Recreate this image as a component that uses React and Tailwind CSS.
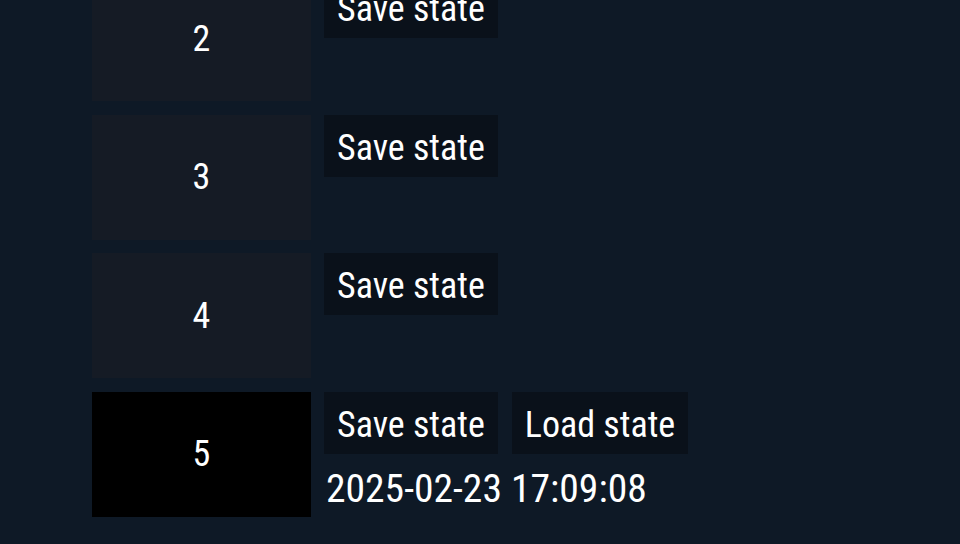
import React from "react";

const slots = [
  { n: 2, date: null, active: false },
  { n: 3, date: null, active: false },
  { n: 4, date: null, active: false },
  { n: 5, date: "2025-02-23 17:09:08", active: true },
];

export default function App() {
  return (
    <div
      className="w-[960px] h-[544px] overflow-hidden bg-[#0e1926] text-white font-[440]"
      style={{ fontFamily: "Roboto, 'Liberation Sans', sans-serif", fontStretch: "75%" }}
    >
      <div className="flex flex-col gap-[13.5px] pl-[92px] mt-[-24px]">
        {slots.map((s) => (
          <div key={s.n} className="flex gap-[13px]">
            <div
              className={`w-[219px] h-[125px] shrink-0 flex items-center justify-center text-[36px] ${
                s.active ? "bg-black" : "bg-[#151b25]"
              }`}
            >
              {s.n}
            </div>
            <div className="flex flex-col">
              <div className="flex gap-[14px]">
                <button className="h-[62px] px-[13px] pt-[4px] bg-[#0a111a] text-[36px] leading-none text-white">
                  Save state
                </button>
                {s.date && (
                  <button className="h-[62px] px-[13px] pt-[4px] bg-[#0a111a] text-[36px] leading-none text-white">
                    Load state
                  </button>
                )}
              </div>
              {s.date && (
                <div className="text-[39.6px] leading-none mt-[15px] ml-[2px]">{s.date}</div>
              )}
            </div>
          </div>
        ))}
      </div>
    </div>
  );
}
